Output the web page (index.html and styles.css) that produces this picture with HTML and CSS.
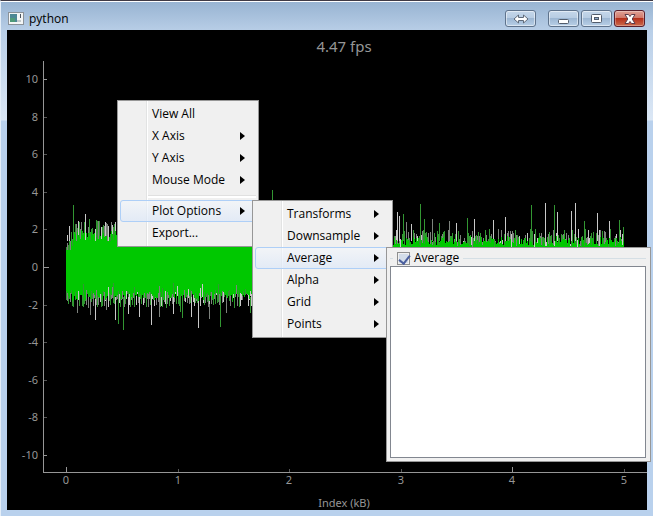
FILE: index.html
```html
<!DOCTYPE html>
<html lang="en">
<head>
    <meta charset="UTF-8">
    <meta name="viewport" content="width=device-width, initial-scale=1.0">
    <title>python</title>
    <link rel="stylesheet" href="styles.css">
</head>
<body>
    <div class="window">
        <header class="titlebar">
            <svg class="app-icon" width="16" height="14" viewBox="0 0 16 14">
                <rect x="0.5" y="0.5" width="15" height="12" fill="#f4f6f6" stroke="#8b9299"/>
                <rect x="2" y="2" width="7" height="8" fill="#4d8794"/>
                <rect x="2" y="6" width="5" height="4" fill="#4f9a78"/>
                <rect x="12" y="2" width="1" height="4" fill="#4a5560"/>
                <rect x="9" y="8" width="4" height="2" fill="#c3c9cc"/>
            </svg>
            <h1 class="caption">python</h1>
            <button class="win-btn swap" type="button" aria-label="Switch">
                <svg width="16" height="10" viewBox="0 0 16 10">
                    <path d="M1 5 L5.500 1 V3.500 H10.500 V1 L15 5 L10.500 9 V6.500 H5.500 V9 Z" fill="#fff" stroke="#606b7a"/>
                </svg>
            </button>
            <button class="win-btn" type="button" aria-label="Minimize">
                <svg width="11" height="11" viewBox="0 0 11 11">
                    <rect x="0.5" y="6.5" width="10" height="4" rx="1" fill="#fff" stroke="#525c6b"/>
                </svg>
            </button>
            <button class="win-btn" type="button" aria-label="Maximize">
                <svg width="11" height="9" viewBox="0 0 11 9">
                    <rect x="0.5" y="0.5" width="10" height="8" rx="1" fill="#fff" stroke="#525c6b"/>
                    <rect x="3.5" y="3.5" width="4" height="2" fill="#8ea9c9" stroke="#525c6b"/>
                </svg>
            </button>
            <button class="win-btn close" type="button" aria-label="Close">
                <svg width="12" height="10" viewBox="0 0 12 10">
                    <path d="M1 0.500 H4.500 L6 2.500 L7.500 0.500 H11 L8.200 5 L11 9.500 H7.500 L6 7.500 L4.500 9.500 H1 L3.800 5 Z" fill="#fff" stroke="#5d3d4c"/>
                </svg>
            </button>
        </header>

        <main class="view">
            <svg id="plot" class="plot"></svg>
        </main>
    </div>

    <ul class="menu context">
        <li><button type="button">View All</button></li>
        <li class="sub"><button type="button">X Axis</button></li>
        <li class="sub"><button type="button">Y Axis</button></li>
        <li class="sub"><button type="button">Mouse Mode</button></li>
        <li class="separator"></li>
        <li class="sub open">
            <button type="button">Plot Options</button>
            <ul class="menu submenu">
                <li class="sub"><button type="button">Transforms</button></li>
                <li class="sub"><button type="button">Downsample</button></li>
                <li class="sub open">
                    <button type="button">Average</button>
                    <div class="panel submenu">
                        <div class="group-title">
                            <input type="checkbox" id="average" checked>
                            <label for="average">Average</label>
                        </div>
                        <div class="param-list"></div>
                    </div>
                </li>
                <li class="sub"><button type="button">Alpha</button></li>
                <li class="sub"><button type="button">Grid</button></li>
                <li class="sub"><button type="button">Points</button></li>
            </ul>
        </li>
        <li><button type="button">Export...</button></li>
    </ul>

    <script src="plot.js"></script>
</body>
</html>
```

FILE: styles.css
```css
* { box-sizing: border-box; }
body { margin: 0; height: 100vh; overflow: hidden; font-family: "Open Sans", "Noto Sans", sans-serif; font-size: 12px; color: #000; }

/* window frame */
.window { display: flex; flex-direction: column; height: 100%; padding: 0 6px 6px; border-top: 1px solid #3f3a45; border-left: 1px solid #e4eef8; background: linear-gradient(#b9cfe8 0, #b9cfe8 30px, #dbe7f5 119px, #b9d1ed 120px); }
.titlebar { display: flex; align-items: center; gap: 2px; height: 29px; margin: 0 -6px; padding: 6px 8px 0 7px; border-top: 1px solid #fff; background: linear-gradient(#98b4d2, #b7cde6); }
.titlebar .app-icon { margin: 0 3px 1px 0; }
.caption { flex: 1; margin: 0; font-size: 12px; font-weight: normal; line-height: 16px; }
.win-btn { display: flex; align-items: center; justify-content: center; width: 31px; height: 17px; margin-bottom: 1px; padding: 0; border: 1px solid #5f738c; border-radius: 3px; background: linear-gradient(#c5d7ea 0, #b6cbe2 50%, #9db7d3 50%, #b8cfe6 100%); box-shadow: inset 0 0 0 1px rgba(255,255,255,0.5); }
.win-btn.swap { margin-right: 10px; }
.win-btn.close { border-color: #5a1f2c; background: linear-gradient(#e0a196 0, #cf7466 50%, #b5301c 50%, #cc6a4c 100%); box-shadow: inset 0 0 0 1px rgba(255,255,255,0.3); }

/* plot */
.view { flex: 1; min-height: 0; background: #000; }
.plot { display: block; width: 100%; height: 100%; }
.plot text { font-family: "Noto Sans", sans-serif; font-size: 11px; fill: #969696; }
.plot .title { font-size: 15px; }
.plot .axis { stroke: #969696; }
.plot .minor { stroke: #555; }
.plot path { shape-rendering: crispEdges; fill: none; }
.plot .dark { stroke: #329632; }
.plot .gray { stroke: #7d827d; }
.plot .light { stroke: #c8c8c8; }
.plot .green { stroke: #00c800; }

/* menus */
.menu { position: absolute; width: 141px; margin: 0; padding: 2px; list-style: none; border: 1px solid #979797; background: linear-gradient(90deg, transparent 28px, #e2e3e3 28px, #e2e3e3 29px, #fff 29px, #fff 30px, transparent 30px) #f0f0f0; }
.context { left: 117px; top: 100px; width: 142px; }
.menu li { position: relative; }
.submenu { position: absolute; z-index: 1; top: 0; left: calc(100% - 4px); }
.menu button { display: block; width: 100%; height: 22px; padding: 0 0 0 31px; border: 1px solid transparent; border-radius: 3px; background: none; font: inherit; line-height: 20px; text-align: left; color: #000; }
.menu .open > button { border-color: #aecff7; background: linear-gradient(rgba(243,247,252,0.6), rgba(221,232,248,0.7)); }
.menu .sub > button::after { content: ""; position: absolute; top: 7px; right: 11px; border: 4px solid transparent; border-left: 5px solid #000; border-right: 0; }
.separator { height: 9px; padding: 4px 0 0 28px; }
.separator::before { content: ""; display: block; height: 2px; border-top: 1px solid #e0e0e0; background: #fff; }

/* average panel */
.panel { width: 265px; height: 215px; padding: 2px 4px 3px 3px; display: flex; flex-direction: column; border: 1px solid #979797; background: #f0f0f0; }
.group-title { display: flex; align-items: center; gap: 4px; height: 16px; }
.group-title::before { content: ""; width: 3px; border-top: 1px solid #d5dfe5; }
.group-title::after { content: ""; flex: 1; border-top: 1px solid #d5dfe5; }
.group-title label { line-height: 16px; }
.group-title input { appearance: none; width: 13px; height: 13px; margin: 0; border: 1px solid #8e8f8f; background: #d3dde9; background-clip: content-box; padding: 1px; position: relative; }
.group-title input:checked::after { content: ""; position: absolute; left: 3px; top: 0; width: 5px; height: 9px; border: solid #4b5f9e; border-width: 0 2px 2px 0; transform: rotate(38deg); }
.param-list { flex: 1; border: 1px solid #828790; background: #fff; }
```

FILE: plot.js
```js
const svg = document.getElementById('plot');
const W = svg.clientWidth;
const H = svg.clientHeight;

// plot area inside the view
const left = 36, top0 = 31, bottom = H - 38;
const yUnit = (bottom - top0) / 21.86;
const yZero = Math.round(top0 + 10.96 * yUnit);
const xZero = left + 23;
const xUnit = (W - xZero - 23) / 5;

function add(name, attrs, text) {
    const el = document.createElementNS('http://www.w3.org/2000/svg', name);
    for (const key in attrs) el.setAttribute(key, attrs[key]);
    if (text) el.textContent = text;
    svg.appendChild(el);
}

let seed = 11;
function rand() {
    seed = (seed * 16807) % 2147483647;
    return seed / 2147483647;
}

// tallest samples: [column, height, colour]
const highs = [
    [1, 32, 'light'], [3, 41, 'light'], [7, 62, 'dark'], [13, 45, 'dark'], [19, 53, 'light'], [23, 48, 'dark'],
    [30, 47, 'dark'], [35, 40, 'light'], [39, 45, 'light'], [46, 42, 'light'], [49, 37, 'gray'], [206, 77, 'dark'],
    [331, 55, 'light'], [333, 51, 'light'], [337, 53, 'dark'], [340, 45, 'gray'], [345, 43, 'light'], [354, 63, 'dark'],
    [358, 48, 'dark'], [366, 48, 'gray'], [373, 44, 'dark'], [383, 46, 'gray'], [390, 44, 'light'], [401, 49, 'dark'],
    [408, 48, 'light'], [427, 47, 'light'], [439, 50, 'light'], [465, 62, 'dark'], [479, 64, 'light'], [488, 62, 'dark'],
    [491, 55, 'light'], [505, 56, 'light'], [509, 64, 'light'], [518, 46, 'dark'], [531, 54, 'light'], [543, 46, 'light'],
    [553, 47, 'dark'], [557, 40, 'dark']
];
const lows = [
    [11, 46, 'gray'], [24, 48, 'gray'], [29, 53, 'light'], [40, 43, 'gray'], [49, 53, 'light'], [52, 57, 'dark'],
    [57, 63, 'dark'], [62, 47, 'light'], [73, 50, 'light'], [85, 58, 'light'], [93, 50, 'gray'], [107, 47, 'light'],
    [114, 45, 'dark'], [116, 51, 'dark'], [125, 50, 'light'], [132, 61, 'light'], [143, 52, 'gray'], [154, 60, 'dark'],
    [160, 46, 'gray'], [168, 41, 'dark'], [184, 46, 'dark']
];

const paths = { dark: '', gray: '', light: '', green: '' };
function column(cls, x, y1, y2) {
    paths[cls] += 'M' + (x + 0.5) + ' ' + Math.round(y1) + 'V' + Math.round(y2);
}

const columns = Math.round(5 * xUnit);
const kinds = ['dark', 'dark', 'gray', 'dark', 'light', 'gray'];
for (let i = 0; i < columns; i++) {
    const x = Math.round(xZero + i);
    const start = i < 5;
    const dense = i >= 8 && i < 52;
    // the outer part of each column, then the solid body over it
    const up = start ? 20 + rand() * 10 : (dense ? 30 : 22) + rand() * 16;
    const down = 27 + rand() * 14;
    const kind = kinds[Math.floor(rand() * kinds.length)];
    column(kind, x, yZero - up, yZero);
    column(kind, x, yZero, yZero + down);
    const bodyUp = start ? 17 : (dense ? 26 : 20) + rand() * 11;
    const bodyDown = rand() < 0.15 ? 15 + rand() * 10 : 23 + rand() * 11;
    column('green', x, yZero - Math.min(up, bodyUp), yZero + Math.min(down, bodyDown));
}
highs.forEach(([i, h, cls]) => column(cls, xZero + i, yZero - h, yZero - 26));
lows.forEach(([i, h, cls]) => column(cls, xZero + i, yZero + 30, yZero + h));
for (const cls in paths) add('path', { class: cls, d: paths[cls] });

// axes
add('path', { class: 'axis', d: `M${left + 0.5} ${top0}V${bottom + 0.5}H${W}` });
for (let v = 10; v >= -10; v -= 2) {
    const y = Math.round(yZero - v * yUnit);
    const major = v % 10 === 0;
    add('path', { class: major ? 'axis' : 'minor', d: `M${left + 1} ${y + 0.5}h${v === 0 ? 5 : 3}` });
    add('text', { x: left - 5, y: y + 4, 'text-anchor': 'end' }, String(v));
}
for (let v = 0; v <= 5; v++) {
    const x = Math.round(xZero + v * xUnit);
    const major = v % 4 === 0;
    add('path', { class: major ? 'axis' : 'minor', d: `M${x + 0.5} ${bottom}v${major ? -5 : -3}` });
    add('text', { x: x, y: bottom + 12, 'text-anchor': 'middle' }, String(v));
}
add('text', { x: left + (W - left) / 2 - 1, y: H - 3, 'text-anchor': 'middle' }, 'Index (kB)');
add('text', { class: 'title', x: left + (W - left) / 2 - 1, y: 22, 'text-anchor': 'middle' }, '4.47 fps');
```
